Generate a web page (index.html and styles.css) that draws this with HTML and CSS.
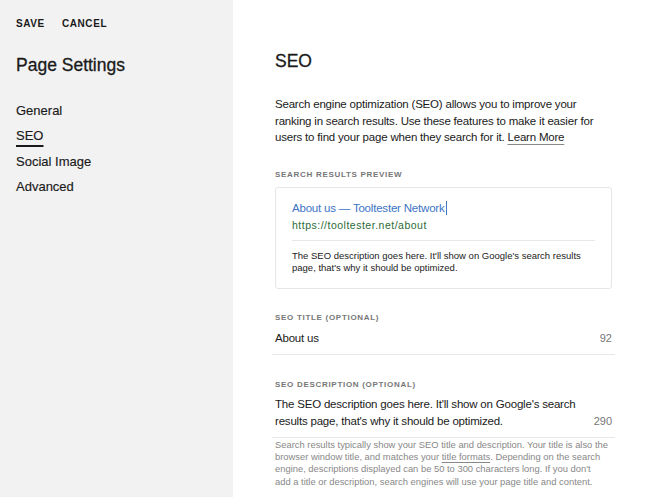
FILE: index.html
```html
<!DOCTYPE html>
<html>
<head>
<meta charset="utf-8">
<link rel="stylesheet" href="styles.css">
</head>
<body>
<div class="app">
  <aside class="sidebar">
    <div class="actions">
      <span class="action">SAVE</span>
      <span class="action">CANCEL</span>
    </div>
    <h1 class="side-title">Page Settings</h1>
    <nav class="nav">
      <a class="nav-item">General</a>
      <a class="nav-item active">SEO</a>
      <a class="nav-item">Social Image</a>
      <a class="nav-item">Advanced</a>
    </nav>
  </aside>
  <main class="main">
    <h2 class="heading">SEO</h2>
    <p class="intro">Search engine optimization (SEO) allows you to improve your ranking in search results. Use these features to make it easier for users to find your page when they search for it. <a class="learn">Learn More</a></p>
    <div class="label">SEARCH RESULTS PREVIEW</div>
    <div class="preview">
      <div class="pv-title">About us — Tooltester Network<span class="caret"></span></div>
      <div class="pv-url">https://tooltester.net/about</div>
      <div class="pv-sep"></div>
      <div class="pv-desc">The SEO description goes here. It'll show on Google's search results page, that's why it should be optimized.</div>
    </div>
    <div class="label label-field">SEO TITLE (OPTIONAL)</div>
    <div class="field">
      <span class="field-value">About us</span>
      <span class="count">92</span>
    </div>
    <div class="label label-field2">SEO DESCRIPTION (OPTIONAL)</div>
    <div class="field field-multi">
      <span class="field-value">The SEO description goes here. It'll show on Google's search results page, that's why it should be optimized.</span>
      <span class="count">290</span>
    </div>
    <p class="help">Search results typically show your SEO title and description. Your title is also the browser window title, and matches your <a class="help-link">title formats</a>. Depending on the search engine, descriptions displayed can be 50 to 300 characters long. If you don't add&nbsp;a title or description, search engines will use your page title and content.</p>
  </main>
</div>
</body>
</html>
```
FILE: styles.css
```css
* { box-sizing: border-box; }
html, body { margin: 0; padding: 0; height: 100%; }
body {
  font-family: "Liberation Sans", Arial, sans-serif;
  color: #1a1a1a;
  background: #fff;
  overflow: hidden;
}
.app { display: flex; height: 497px; }
.sidebar {
  width: 233px;
  flex: none;
  background: #f2f2f2;
  padding: 17px 0 0 16px;
}
.actions { display: flex; gap: 17px; }
.action {
  font-size: 10px;
  font-weight: 700;
  letter-spacing: 0.6px;
  line-height: 14px;
  color: #1a1a1a;
}
.side-title {
  margin: 22px 0 0;
  font-size: 17.5px;
  font-weight: 400;
  line-height: 24px;
  -webkit-text-stroke: 0.3px #1a1a1a;
}
.nav { display: flex; flex-direction: column; align-items: flex-start; margin-top: 25px; gap: 7px; }
.nav-item {
  font-size: 13px;
  line-height: 18.3px;
  color: #1a1a1a;
  -webkit-text-stroke: 0.15px #1a1a1a;
}
.nav-item.active {
  text-decoration: underline;
  text-decoration-thickness: 2px;
  text-underline-offset: 5px;
}
.main {
  flex: 1;
  padding: 49px 0 0 42px;
  width: 0;
}
.main > * { width: 337px; }
.heading {
  margin: 0;
  font-size: 17.5px;
  font-weight: 400;
  -webkit-text-stroke: 0.3px #1a1a1a;
  line-height: 24px;
}
.intro {
  margin: 23px 0 0;
  font-size: 11.5px;
  letter-spacing: -0.2px;
  line-height: 16.7px;
  color: #1a1a1a;
}
.learn {
  text-decoration: underline;
  text-decoration-color: #888;
  text-underline-offset: 3px;
}
.label {
  margin-top: 23px;
  font-size: 8px;
  font-weight: 700;
  letter-spacing: 0.7px;
  line-height: 12px;
  color: #777;
}
.preview {
  margin-top: 6px;
  border: 1px solid #e6e6e6;
  border-radius: 3px;
  padding: 12px 16px 13px;
}
.pv-title {
  font-size: 11.5px;
  letter-spacing: -0.2px;
  line-height: 16px;
  color: #3d74c6;
  display: flex;
  align-items: center;
}
.caret { display: inline-block; width: 1px; height: 14px; background: #3d74c6; margin-left: 1px; }
.pv-url {
  margin-top: 2px;
  font-size: 10.5px;
  letter-spacing: 0.5px;
  line-height: 14px;
  color: #2b6b37;
}
.pv-sep { height: 1px; background: #e8e8e8; margin: 8px 0 9px; }
.pv-desc {
  font-size: 9.5px;
  line-height: 12.2px;
  color: #222;
}
.label-field { margin-top: 23px; }
.label-field2 { margin-top: 24px; }
.field {
  width: 343px;
  margin-left: -3px;
  padding: 6px 3px 8px 3px;
  border-bottom: 1px solid #e8e8e8;
  display: flex;
  justify-content: space-between;
  align-items: flex-end;
}
.field-value { font-size: 11.5px; letter-spacing: -0.2px; line-height: 16.5px; color: #1a1a1a; }
.field-multi { padding-top: 5px; }
.field-multi .field-value { width: 320px; }
.count { font-size: 11px; line-height: 16.5px; color: #777; }
.help {
  margin: 1px 0 0;
  font-size: 9.4px;
  line-height: 12.2px;
  color: #888;
  width: 335px;
}
.help-link { text-decoration: underline; text-underline-offset: 2px; }
```
